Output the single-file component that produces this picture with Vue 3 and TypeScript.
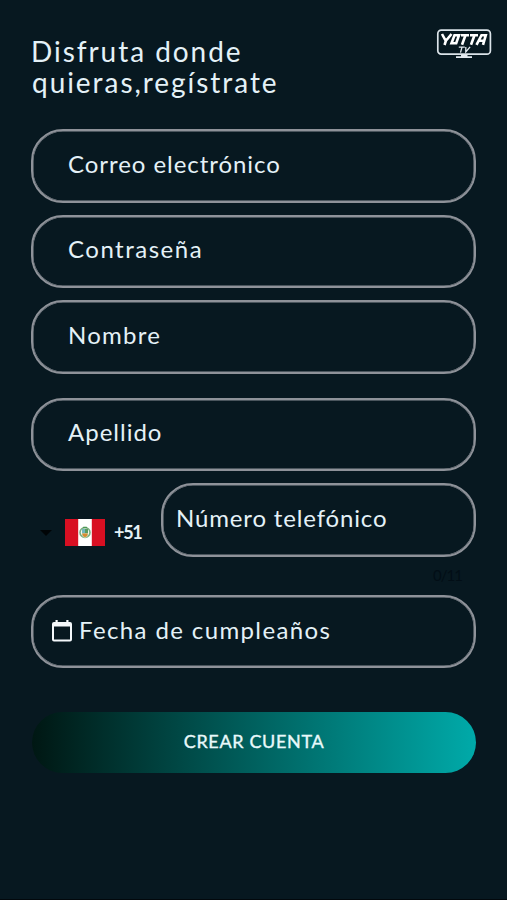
<script setup lang="ts">
interface Field {
  id: string
  label: string
}

const fields: Field[] = [
  { id: 'email', label: 'Correo electrónico' },
  { id: 'password', label: 'Contraseña' },
  { id: 'name', label: 'Nombre' },
  { id: 'surname', label: 'Apellido' },
]
</script>

<template>
  <main class="screen">
    <header class="header">
      <h1 class="title">
        <span class="line first">Disfruta donde</span>
        <span class="line second">quieras,regístrate</span>
      </h1>
      <svg class="logo" viewBox="0 0 56 32" width="56" height="32">
        <rect x="1.800" y="2.200" width="52.600" height="24" rx="3.5" fill="none" stroke="#dbe3e9" stroke-width="1.7" />
        <path d="M25 26.500h6.500v1.700h4.500v1.800h-16v-1.800h5z" fill="#e3eaf0" />
        <g fill="none" stroke="#fff" stroke-width="2.600">
          <path d="M6 6l3 5.500h2L15.500 6M10.500 11l-2 6M18.500 7.200h4.500l-2.800 8h-4.700zM25 7.200h8M29.500 7.200l-3.500 9.500M34 7.200h8M38.500 7.200l-3.500 9.500M40.500 16.800l5-9.600h4.300l-2.800 9.600M43 12.800h5.500" />
        </g>
        <path d="M22.800 19.200h6M26 19.200l-1.500 5.500M29.800 18.900v5l4.300-5" fill="none" stroke="#e3eaf0" stroke-width="1.300" />
      </svg>
    </header>

    <form class="form" @submit.prevent>
      <div v-for="field in fields" :key="field.id" class="field" :class="field.id">
        <span class="label">{{ field.label }}</span>
      </div>

      <div class="phone-row">
        <div class="country">
          <svg class="caret" viewBox="0 0 12 6" width="12" height="6"><path d="M0 0h12L6 6z" fill="#000406" /></svg>
          <svg class="flag" viewBox="0 0 40 27" width="40" height="27">
            <path d="M0 0h40v27H0z" fill="#d80f22" />
            <path d="M13.200 0h13.600v27H13.200z" fill="#fff" />
            <circle cx="20" cy="13.500" r="5" fill="none" stroke="#78ad7d" stroke-width="1.600" />
            <path d="M16.800 10h6.400v5q0 3-3.200 4q-3.200-1-3.200-4z" fill="#c2d6b0" />
            <path d="M17 10h3v4h-3z" fill="#72b6bf" />
            <path d="M20 10h3v4h-3z" fill="#5b9b61" />
            <path d="M17.200 14.500h5.600q0 2.800-2.800 3.800q-2.800-1-2.800-3.800z" fill="#d98a32" />
            <path d="M18 7.800h4v1.500h-4z" fill="#4f9958" />
          </svg>
          <span class="code">+51</span>
        </div>
        <div class="field phone"><span class="label">Número telefónico</span></div>
      </div>
      <div class="counter">0/11</div>

      <div class="field birthday">
        <svg class="calendar" viewBox="0 0 20 22" width="20" height="22">
          <path d="M3.500 0h2.200v2h8.600V0h2.200v2H18q2 0 2 2v15.500q0 2-2 2H2q-2 0-2-2V4q0-2 2-2h1.500zM2 6.500v13h16v-13z" fill="#f4f8fb" fill-rule="evenodd" />
        </svg>
        <span class="label">Fecha de cumpleaños</span>
      </div>

      <button class="submit" type="submit"><span>CREAR CUENTA</span></button>
    </form>
  </main>
</template>

<style>
body {
  background: #071820;
}
</style>

<style scoped>
.screen {
  box-sizing: border-box;
  width: 507px;
  height: 900px;
  padding: 26px 31px 0;
  background: #071820;
  border-bottom: 1px solid #02080c;
  color: #e4f1f7;
  font-family: Lato, "Open Sans", sans-serif;
}
.header {
  display: flex;
  justify-content: space-between;
  height: 103px;
  margin-right: -16px;
}
.logo { margin-top: 1.5px; }
.title {
  margin: 10px 0 0;
  font-size: 28px;
  font-weight: 400;
  line-height: 31px;
}
.line {
  display: block;
  white-space: nowrap;
}
.first { letter-spacing: 1.95px; }
.second {
  padding-left: 1px;
  letter-spacing: 1.95px;
}
.form {
  display: flex;
  flex-direction: column;
}
.field {
  box-sizing: border-box;
  display: flex;
  align-items: center;
  height: 73.5px;
  padding: 0 0 4px 35px;
  margin-bottom: 12px;
  border: 2px solid #8e9299;
  box-shadow: inset 0 0 0 0.5px #8e9299;
  border-radius: 32px;
  font-size: 24px;
  line-height: 30px;
  white-space: nowrap;
}
.email .label { letter-spacing: 0.95px; }
.password .label { letter-spacing: 1.5px; }
.name .label { letter-spacing: 1.25px; }
.surname .label { letter-spacing: 1px; }
.name { margin-bottom: 24px; }
.phone-row {
  display: flex;
}
.country {
  display: flex;
  align-items: center;
  box-sizing: border-box;
  width: 130px;
  height: 73.5px;
  padding: 25px 0 0 9px;
}
.caret { margin-top: 2px; }
.flag { margin-left: 13px; }
.code {
  margin-left: 9px;
  font-size: 18px;
  font-weight: 700;
  line-height: 22px;
  letter-spacing: -1.3px;
}
.phone {
  flex: 1;
  margin: 0;
  padding-left: 13px;
}
.phone .label { letter-spacing: 0.85px; }
.counter {
  height: 38px;
  padding: 8px 14px 0 0;
  box-sizing: border-box;
  color: #020e16;
  font-size: 15px;
  line-height: 20px;
  letter-spacing: -1px;
  text-align: right;
}
.birthday {
  padding: 0 0 3px 19px;
  margin-bottom: 43.5px;
}
.calendar { margin: 2px 7px 0 0; }
.birthday .label { letter-spacing: 1.38px; }
.submit {
  height: 61px;
  margin: 0 0 0 1px;
  padding: 0 0 3px;
  border: 0;
  border-radius: 31px;
  background: linear-gradient(90deg, #001713 0%, #00aaa9 100%);
  color: #e9f9fb;
  font-family: inherit;
  font-size: 18px;
  letter-spacing: 0.65px;
  -webkit-text-stroke: 0.35px #e9f9fb;
}
</style>
